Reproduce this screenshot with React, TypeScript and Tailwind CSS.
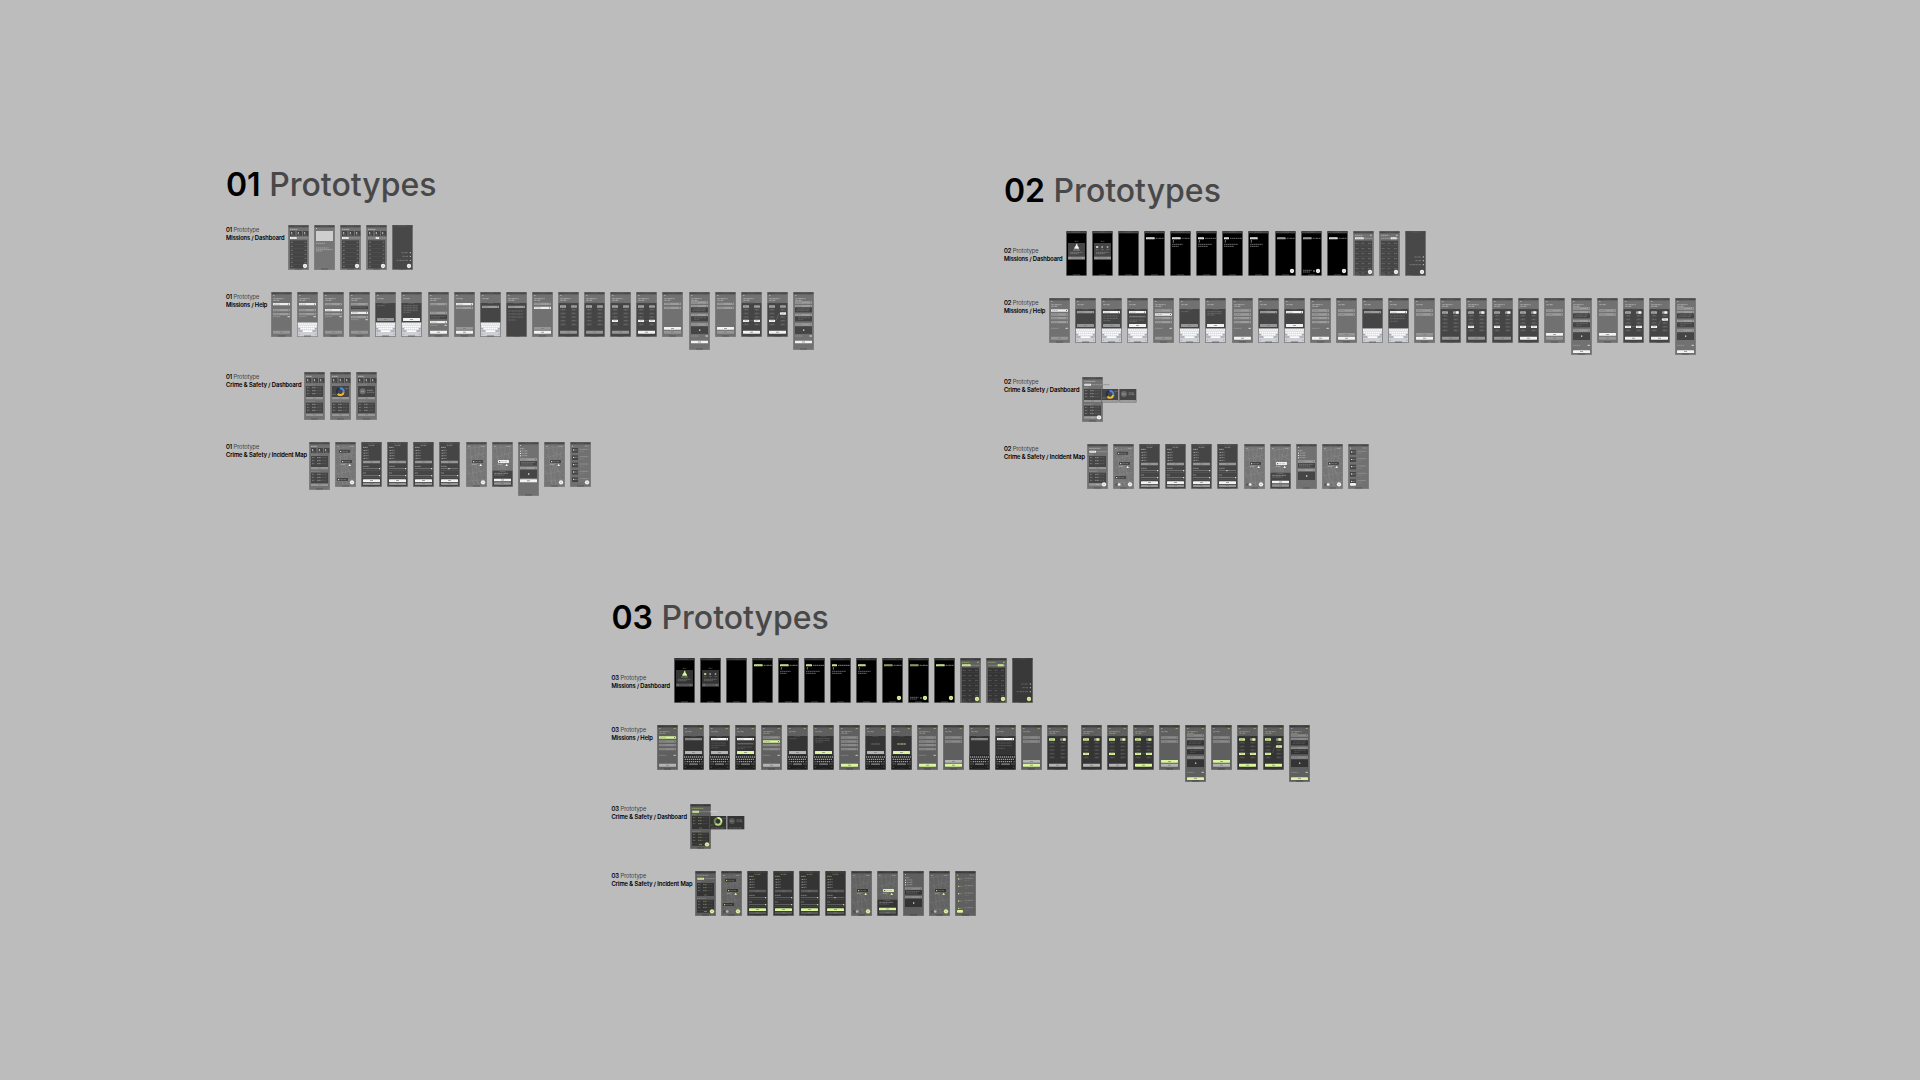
import type { ReactNode } from "react";

type Theme = {
  body: string;
  head: string;
  panel: string;
  field: string;
  active: string;
  on: string;
  button: string;
  ink: string;
  title: string;
  dim: string;
  keyboard: string;
  key: string;
  shift: string;
  road: string;
  edge: string;
};

const grey: Theme = {
  body: "#717171",
  head: "#4a4a4a",
  panel: "#454545",
  field: "#9c9c9c",
  active: "#ededed",
  on: "#f2f2f2",
  button: "#969696",
  ink: "#c4c4c4",
  title: "#b4b4b4",
  dim: "#5c5c5c",
  keyboard: "#cdcfd4",
  key: "#fdfdfd",
  shift: "#a3a8b1",
  road: "#929292",
  edge: "#858585",
};

const green: Theme = {
  body: "#5f5f5f",
  head: "#3b3b3b",
  panel: "#343434",
  field: "#8a8a8a",
  active: "#daf59c",
  on: "#daf59c",
  button: "#b4b4b4",
  ink: "#b5b5b5",
  title: "#93a86a",
  dim: "#4c4c4c",
  keyboard: "#202020",
  key: "#9a9a9a",
  shift: "#505050",
  road: "#7b7b7b",
  edge: "#7a7a7a",
};

/* Wireframe thumbnails are drawn at three units per pixel. */

function Box({ x, y, w, h, f, r = 0 }: { x: number; y: number; w: number; h: number; f: string; r?: number }) {
  return <rect x={x} y={y} width={w} height={h} rx={r} fill={f} />;
}

function Line({ x, y, w, c, s = 2, o = 0.8 }: { x: number; y: number; w: number; c: string; s?: number; o?: number }) {
  return (
    <path d={`M${x} ${y}h${w}`} stroke={c} strokeWidth={s} strokeDasharray="5 1 3 1 7 1" opacity={o} fill="none" />
  );
}

function Thumb({
  t,
  h = 45,
  w = 21,
  bg,
  gap = false,
  children,
}: {
  t: Theme;
  h?: number;
  w?: number;
  bg?: string;
  gap?: boolean;
  children?: ReactNode;
}) {
  const H = h * 3;
  return (
    <svg
      width={w}
      height={h}
      viewBox={`0 0 ${w * 3} ${H}`}
      className={gap ? "ml-2 block shrink-0" : "block shrink-0"}
      aria-hidden="true"
    >
      <Box x={0} y={0} w={63} h={H} f={t.edge} />
      <Box x={2} y={1} w={59} h={H - 3} f={bg ?? t.body} />
      <Box x={2} y={1} w={59} h={6} f={t.head} />
      <Line x={20} y={3} w={22} c={t.body} o={0.7} />
      {children}
      <Box x={21} y={H - 4} w={21} h={2} f={bg === "#000000" ? "#777777" : t.head} />
    </svg>
  );
}

function Fab({ t, y = 123 }: { t: Theme; y?: number }) {
  return (
    <>
      <circle cx={51} cy={y} r={6.5} fill={t.on} />
      <path d={`M49 ${y}h4`} stroke={t.field} strokeWidth={2} />
    </>
  );
}

function Bar({ y, f, h = 8, ink = "#777777" }: { y: number; f: string; h?: number; ink?: string }) {
  return (
    <>
      <Box x={6} y={y} w={51} h={h} f={f} r={1} />
      <Box x={27} y={y + h / 2 - 1} w={9} h={2} f={ink} />
    </>
  );
}

function Field({ y, f, h = 7 }: { y: number; f: string; h?: number }) {
  return (
    <>
      <Box x={6} y={y} w={51} h={h} f={f} r={1} />
      <Line x={9} y={y + h / 2} w={18} c="#606060" o={0.5} />
      <Box x={51} y={y + 2} w={3} h={h - 4} f="#707070" />
    </>
  );
}

function Keyboard({ t, y = 91 }: { t: Theme; y?: number }) {
  const light = t === grey;
  return (
    <>
      <Box x={2} y={y} w={59} h={133 - y} f={t.keyboard} />
      <g stroke={t.key} strokeWidth={light ? 5 : 4} fill="none" strokeDasharray={light ? "5 1" : "4 2"}>
        <path d={`M3 ${y + 5}h57`} />
        <path d={`M5 ${y + 12}h53`} />
        <path d={`M11 ${y + 19}h41`} />
      </g>
      <Box x={3} y={y + 17} w={6} h={4} f={t.shift} />
      <Box x={54} y={y + 17} w={6} h={4} f={t.shift} />
      <Box x={18} y={y + 24} w={27} h={5} f={light ? t.key : "#6c6c6c"} r={1} />
      <Box x={4} y={y + 24} w={11} h={4} f={t.shift} />
      <Box x={48} y={y + 24} w={11} h={4} f={t.shift} />
      <Box x={5} y={y + 34} w={4} h={3} f={t.shift} />
      <Box x={54} y={y + 34} w={4} h={3} f={t.shift} />
    </>
  );
}

function Heading({ t, lines = 2 }: { t: Theme; lines?: number }) {
  return (
    <>
      <Box x={7} y={9} w={3} h={3} f={t.ink} />
      {t === green && <Box x={50} y={9} w={6} h={3} f={t.title} />}
      <Line x={7} y={20} w={lines === 1 ? 20 : 31} c={t.title} s={3} />
      {lines > 1 && <Line x={7} y={25} w={19} c={t.title} s={3} />}
    </>
  );
}

function Toggle({ t, y }: { t: Theme; y: number }) {
  return (
    <>
      <Line x={6} y={y} w={22} c={t.ink} o={0.6} />
      <Box x={49} y={y - 2} w={8} h={4} f={t.ink} r={2} />
    </>
  );
}

type FormProps = {
  t: Theme;
  fields: number[];
  active?: number;
  toggle?: number;
  upper?: "on" | "off";
  lower?: "on" | "off";
  keyboard?: boolean;
  blocks?: [number, number][];
  lines?: number;
};

function Form({ t, fields, active, toggle, upper, lower, keyboard, blocks = [], lines = 2 }: FormProps) {
  return (
    <Thumb t={t}>
      <Heading t={t} lines={lines} />
      {blocks.map(([y, bh]) => (
        <g key={y}>
          <Box x={6} y={y} w={51} h={bh} f={t.panel} />
          <Line x={9} y={y + 4} w={43} c={t.field} o={0.5} />
          {bh > 8 && <Line x={9} y={y + 9} w={27} c={t.field} o={0.5} />}
        </g>
      ))}
      {fields.map((y, i) => (
        <Field key={y} y={y} f={i === active ? t.active : t.field} />
      ))}
      {toggle !== undefined && <Toggle t={t} y={toggle} />}
      {upper && <Bar y={105} f={upper === "on" ? t.on : t.button} />}
      {lower && <Bar y={116} h={9} f={lower === "on" ? t.on : t.button} />}
      {keyboard && <Keyboard t={t} />}
    </Thumb>
  );
}

type SheetProps = {
  t: Theme;
  field?: "on" | "off";
  fieldY?: number;
  rows?: number[];
  text?: number[];
  amount?: string;
  button?: "on" | "off";
  keyboard?: boolean;
  full?: boolean;
};

function Sheet({ t, field, fieldY = 39, rows = [], text = [], amount, button, keyboard = true, full }: SheetProps) {
  return (
    <Thumb t={t}>
      <Heading t={t} lines={full ? 2 : 1} />
      <Box x={2} y={33} w={59} h={100} f={t.panel} />
      <Box x={22} y={33} w={18} h={2} f={t.dim} />
      {field && <Field y={fieldY} f={field === "on" ? "#f4f4f4" : t.field} />}
      {rows.map((y) => (
        <g key={y}>
          <Box x={6} y={y - 3} w={51} h={6} f={t.dim} />
          <Line x={8} y={y} w={45} c={t.field} />
        </g>
      ))}
      {text.map((y, i) => (
        <Line key={y} x={7} y={y} w={i === text.length - 1 ? 22 : 44} c={t.field} o={0.6} />
      ))}
      {amount && <Line x={19} y={57} w={26} c={amount} s={4} />}
      {button && <Bar y={78} h={9} f={button === "on" ? t.on : t.button} />}
      {keyboard && <Keyboard t={t} />}
    </Thumb>
  );
}

type PickerProps = {
  t: Theme;
  left?: number;
  right?: number;
  head?: "plain" | "split";
  button?: "on" | "off";
  link?: boolean;
  gap?: boolean;
};

function Picker({ t, left, right, head = "plain", button = "off", link, gap }: PickerProps) {
  const rows = [53, 64, 75, 86, 97];
  const cell = t === green ? "#3e3e3e" : "#4f4f4f";
  return (
    <Thumb t={t} gap={gap}>
      <Heading t={t} />
      <Box x={2} y={33} w={59} h={100} f={t.panel} />
      <Box x={22} y={32} w={18} h={2} f={t.dim} />
      <Box x={6} y={40} w={18} h={7} f={t === green ? t.on : "#a9a9a9"} r={1} />
      <Box x={39} y={40} w={18} h={7} f={t.field} r={1} />
      {head === "split" && <Box x={left === undefined ? 48 : 46} y={40} w={8} h={7} f={t.on} r={1} />}
      <Line x={9} y={44} w={11} c="#777777" />
      {rows.map((y, i) => (
        <g key={y}>
          <Box x={6} y={y - 3} w={18} h={7} f={i === left ? t.on : cell} r={1} />
          <Box x={39} y={y - 3} w={18} h={7} f={i === right ? t.on : cell} r={1} />
          <Line x={11} y={y} w={9} c={i === left ? "#777777" : t.field} o={0.6} />
          <Line x={43} y={y} w={10} c={i === right ? "#777777" : t.field} o={0.6} />
        </g>
      ))}
      {link && left !== undefined && right !== undefined && (
        <path
          d={`M24 ${rows[left]}C32 ${rows[left]} 31 ${rows[right]} 39 ${rows[right]}`}
          stroke={t.field}
          strokeWidth={1}
          fill="none"
        />
      )}
      <Bar y={116} h={9} f={button === "on" ? t.on : t.button} />
    </Thumb>
  );
}

function Review({ t, h = 57 }: { t: Theme; h?: number }) {
  const first = h === 58;
  return (
    <Thumb t={t} h={h}>
      <Heading t={t} />
      <Field y={28} f={t.field} />
      <Field y={39} f={t.field} />
      <Box x={6} y={46} w={51} h={15} f={t.panel} />
      <Line x={13} y={51} w={38} c={t.field} o={0.6} />
      <Line x={10} y={56} w={38} c={t.field} o={0.5} />
      <Field y={65} f={t.field} />
      <Box x={6} y={73} w={51} h={15} f={t.panel} />
      <Line x={16} y={77} w={34} c={t.field} o={0.5} />
      <Line x={16} y={82} w={14} c={t.field} o={0.5} />
      <Field y={94} f={t.field} />
      <Box x={6} y={103} w={51} h={23} f={t.panel} />
      <Box x={30} y={112} w={4} h={5} f={t.ink} r={1} />
      <Toggle t={t} y={first ? 132 : 142} />
      <Bar y={first ? 146 : 157} h={8} f={t.on} />
    </Thumb>
  );
}

function Cards({ t }: { t: Theme }) {
  return (
    <>
      {[6, 26, 45].map((x) => (
        <g key={x}>
          <Box x={x} y={18} w={16} h={15} f={t.panel} />
          <circle cx={x + 5} cy={24} r={2} fill={t.on} />
          <Line x={x + 3} y={30} w={8} c={t.field} />
        </g>
      ))}
    </>
  );
}

function Tabs({ t, x = 6, y, w = 20 }: { t: Theme; x?: number; y: number; w?: number }) {
  return (
    <>
      <Line x={6} y={y + 3} w={53} c={t.field} s={4} o={0.7} />
      <Box x={x} y={y} w={w} h={6} f={t.on} r={1} />
      <Line x={x + 3} y={y + 3} w={w - 6} c="#888888" o={0.6} />
    </>
  );
}

function MissionList({ t, tab = 6, w = 20 }: { t: Theme; tab?: number; w?: number }) {
  return (
    <Thumb t={t}>
      <Line x={6} y={13} w={22} c={t.ink} s={3} />
      <Cards t={t} />
      <Tabs t={t} x={tab} y={36} w={w} />
      <Box x={6} y={46} w={51} h={84} f={t.panel} />
      {[52, 64, 76, 88, 100, 112, 124].map((y) => (
        <g key={y}>
          <Line x={9} y={y} w={6} c={t.ink} o={0.7} />
          <Line x={50} y={y} w={5} c={t.ink} o={0.6} />
          <Box x={8} y={y + 5} w={47} h={1} f={t.dim} />
        </g>
      ))}
      <Fab t={t} />
    </Thumb>
  );
}

function MissionTable({ t, tab = 6 }: { t: Theme; tab?: number }) {
  return (
    <Thumb t={t}>
      <Line x={6} y={13} w={22} c={t.title} s={3} />
      <Box x={51} y={11} w={5} h={4} f={t.title} />
      <Tabs t={t} x={tab} y={19} w={tab === 6 ? 26 : 18} />
      <Box x={6} y={29} w={51} h={102} f={t.panel} />
      {[37, 53, 68, 83, 98, 113, 126].map((y) => (
        <g key={y}>
          <Line x={8} y={y} w={10} c={t.ink} o={0.5} />
          <Line x={26} y={y} w={8} c={t.ink} o={0.5} />
          <Line x={45} y={y} w={9} c={t.ink} o={0.5} />
          <Box x={8} y={y + 7} w={47} h={1} f={t.dim} />
        </g>
      ))}
      <Fab t={t} />
    </Thumb>
  );
}

function Article({ t }: { t: Theme }) {
  return (
    <Thumb t={t} bg="#767676">
      <Box x={6} y={9} w={3} h={3} f={t.ink} />
      <Box x={6} y={18} w={51} h={30} f="#cecece" />
      <Line x={6} y={55} w={28} c={t.ink} />
      <Line x={6} y={69} w={38} c={t.ink} />
      <Line x={6} y={74} w={50} c={t.ink} />
      <Line x={6} y={78} w={18} c={t.ink} />
    </Thumb>
  );
}

function Menu({ t, y = 83 }: { t: Theme; y?: number }) {
  return (
    <Thumb t={t} bg={t === green ? "#393939" : "#484848"}>
      {[0, 11, 23].map((d, i) => (
        <g key={d}>
          <Line x={[28, 31, 14][i]} y={y + d} w={[20, 17, 34][i]} c={t.field} />
          <circle cx={55} cy={y + d} r={2} fill={t.ink} />
        </g>
      ))}
      <Fab t={t} />
    </Thumb>
  );
}

function Black({ t, children }: { t: Theme; children?: ReactNode }) {
  return (
    <Thumb t={t} bg="#000000">
      {children}
    </Thumb>
  );
}

function Onboarding({ t, step }: { t: Theme; step: 1 | 2 }) {
  return (
    <Black t={t}>
      <Line x={26} y={31} w={11} c={t.title} o={0.7} />
      <Box x={6} y={36} w={51} h={50} f={t.panel} />
      {step === 1 ? (
        <path d="M31 38h3v5l5 7v3H25v-3l5-7z" fill={t.on} />
      ) : (
        [15, 31, 47].map((x, i) => (
          <g key={x}>
            <Box x={x - 3} y={46} w={i === 0 ? 7 : 5} h={4} f={i === 0 ? t.on : t.ink} r={1} />
            <Line x={x - 3} y={56} w={7} c={t.field} />
          </g>
        ))
      )}
      {step === 1 && <Line x={22} y={57} w={20} c={t.on} />}
      <Line x={12} y={64} w={38} c={t.field} />
      <Line x={12} y={68} w={26} c={t.field} />
      <Box x={6} y={77} w={51} h={8} f={t === green ? "#555555" : "#8c8c8c"} />
      <Line x={10} y={81} w={6} c={t.ink} />
      <Line x={47} y={81} w={6} c={t.ink} />
    </Black>
  );
}

type CoachProps = {
  t: Theme;
  w: number;
  tabs?: boolean;
  dim?: boolean;
  tip?: number;
  fab?: boolean;
  hint?: boolean;
};

function Coach({ t, w, tabs = true, dim, tip, fab, hint }: CoachProps) {
  return (
    <Black t={t}>
      {tabs && <Line x={6 + w + 3} y={22} w={51 - w} c={t.button} s={3} o={0.7} />}
      <Box x={6} y={19} w={w} h={6} f={dim ? (t === green ? "#8fa566" : "#a8a8a8") : t.on} r={1} />
      <Line x={9} y={22} w={w - 6} c="#777777" o={0.6} />
      {tip !== undefined && (
        <>
          <path d="M10 27v8" stroke={t.on} strokeWidth={1.5} />
          <Line x={6} y={40} w={tip} c={t.ink} />
          <Line x={6} y={46} w={tip - 12} c={t.ink} />
        </>
      )}
      {hint && (
        <>
          <Line x={6} y={118} w={26} c={t.ink} />
          <Line x={6} y={123} w={21} c={t.ink} />
          <Box x={36} y={119} w={6} h={2} f={t.on} />
        </>
      )}
      {fab && <Fab t={t} y={120} />}
    </Black>
  );
}

function Stats({ t, y, h = 36 }: { t: Theme; y: number; h?: number }) {
  return (
    <>
      <Box x={6} y={y} w={51} h={h} f={t.panel} />
      {[5, 14, 23, 32].filter((d) => d < h - 2).map((d) => (
        <g key={d}>
          <Line x={9} y={y + d} w={7} c={t.ink} o={0.7} />
          <Line x={24} y={y + d} w={12} c={t.title} o={0.9} />
          <Line x={38} y={y + d} w={14} c={t.field} o={0.4} />
        </g>
      ))}
    </>
  );
}

function Donut({ x, y, colors }: { x: number; y: number; colors: [string, string, string] }) {
  return (
    <g fill="none" strokeWidth={6}>
      <path d={`M${x - 2} ${y - 10}A10 10 0 0 1 ${x + 10} ${y + 2}`} stroke={colors[0]} />
      <path d={`M${x + 10} ${y + 2}A10 10 0 0 1 ${x - 8} ${y + 6}`} stroke={colors[1]} />
      <path d={`M${x - 8} ${y + 6}A10 10 0 0 1 ${x - 2} ${y - 10}`} stroke={colors[2]} />
    </g>
  );
}

const blueGold: [string, string, string] = ["#4b86e8", "#f2b92c", "#22334d"];
const greens: [string, string, string] = ["#dfeec0", "#b5d873", "#6f9442"];

function SafetyTall({ t, chart }: { t: Theme; chart?: "donut" | "gauge" }) {
  return (
    <Thumb t={t} h={48}>
      <Line x={6} y={13} w={17} c={t.ink} s={3} />
      <Cards t={t} />
      <Line x={6} y={39} w={26} c={t.ink} o={0.4} />
      {chart ? <Box x={6} y={42} w={51} h={33} f={t.panel} /> : <Stats t={t} y={42} h={33} />}
      {chart === "donut" && (
        <>
          <Donut x={31} y={59} colors={blueGold} />
          <Line x={8} y={67} w={10} c={t.field} />
          <Line x={46} y={50} w={9} c={t.field} />
        </>
      )}
      {chart === "gauge" && (
        <>
          <circle cx={20} cy={58} r={9} fill="#707070" />
          <Line x={15} y={58} w={10} c={t.ink} />
          <Line x={33} y={55} w={18} c={t.ink} />
          <Line x={33} y={61} w={22} c={t.field} />
        </>
      )}
      <Bar y={75} h={7} f={t.button} />
      <Line x={6} y={88} w={26} c={t.ink} o={0.4} />
      <Stats t={t} y={92} h={32} />
      <Bar y={125} h={7} f={t.button} />
    </Thumb>
  );
}

function SafetyBody({ t }: { t: Theme }) {
  return (
    <>
      <Line x={6} y={13} w={34} c={t.title} s={3} />
      <Tabs t={t} x={7} y={20} w={20} />
      <Line x={6} y={32} w={13} c={t.ink} o={0.5} />
      <Stats t={t} y={36} h={33} />
      <Bar y={69} h={6} f={t === green ? t.panel : t.button} />
      <Line x={6} y={82} w={26} c={t.ink} o={0.5} />
      <Stats t={t} y={86} h={31} />
      <Bar y={118} h={7} f={t === green ? t.panel : t.button} ink={t.title} />
    </>
  );
}

function SafetyWide({ t, colors }: { t: Theme; colors: [string, string, string] }) {
  const isGreen = t === green;
  return (
    <Thumb t={t} w={55}>
      <SafetyBody t={t} />
      <Line x={60} y={23} w={22} c={isGreen ? "#d8d8d8" : "#858585"} s={3} />
      <Box x={59} y={36} w={50} h={40} f={t.panel} />
      <Box x={112} y={36} w={51} h={40} f={t.panel} />
      {!isGreen && <Box x={59} y={69} w={50} h={7} f={t.button} />}
      {!isGreen && <Box x={112} y={69} w={51} h={7} f={t.button} />}
      <Line x={64} y={72} w={40} c={t.ink} o={0.5} />
      <Line x={118} y={72} w={38} c={t.ink} o={0.5} />
      <Line x={62} y={63} w={10} c={t.field} />
      <Line x={98} y={43} w={9} c={t.field} />
      <Donut x={84} y={52} colors={colors} />
      <circle cx={126} cy={51} r={9} fill={isGreen ? "#555555" : "#6c6c6c"} />
      <Line x={121} y={51} w={10} c={t.ink} />
      <Line x={140} y={48} w={15} c={t.ink} />
      <Line x={140} y={53} w={19} c={t.field} />
      <Fab t={t} y={121} />
    </Thumb>
  );
}

function SafetyHome({ t }: { t: Theme }) {
  return (
    <Thumb t={t}>
      <SafetyBody t={t} />
      <Fab t={t} y={121} />
    </Thumb>
  );
}

function Pin({ t, x, y, hot }: { t: Theme; x: number; y: number; hot?: boolean }) {
  return (
    <>
      <Box x={x} y={y} w={33} h={9} f={hot ? t.on : t.panel} r={2} />
      <circle cx={x + 5} cy={y + 5} r={2} fill={hot ? t.panel : t.on} />
      <Line x={x + 10} y={y + 5} w={18} c={hot ? "#999999" : t.field} />
    </>
  );
}

function Map({ t, mode, toggle }: { t: Theme; mode: "all" | "one" | "detail"; toggle?: boolean }) {
  return (
    <Thumb t={t} bg={t === green ? "#626262" : "#757575"}>
      <path
        d="M3 20L60 12M3 48L60 32M3 72L60 58M3 96L60 85M3 118L60 112M12 8L24 130M26 8L35 130M42 8L33 60L56 130M55 10L44 72M3 34L30 60L20 100L42 130M3 84L26 130M30 30L60 48M18 62L60 102"
        stroke={t.road}
        strokeWidth={1}
        fill="none"
      />
      <Box x={7} y={12} w={3} h={3} f={t.ink} />
      <Line x={45} y={13} w={11} c={t.ink} />
      {mode === "all" && <Pin t={t} x={12} y={23} />}
      {mode === "all" && <Pin t={t} x={6} y={toggle ? 96 : 108} />}
      <Pin t={t} x={18} y={54} hot={mode === "detail"} />
      <Line x={18} y={67} w={13} c={t.ink} />
      <path d="M44 65l4 7h-8z" fill={t.on} />
      {mode === "detail" ? (
        <>
          <Box x={2} y={86} w={59} h={47} f={t.panel} />
          <Box x={23} y={87} w={17} h={1} f={t.field} />
          <Line x={7} y={94} w={42} c={t.ink} />
          <Line x={7} y={99} w={30} c={t.field} />
          <Bar y={110} h={8} f={t.on} />
          <Bar y={121} h={7} f={t === green ? t.body : t.button} />
        </>
      ) : (
        <>
          {toggle && <Box x={6} y={118} w={18} h={7} f={t.dim} r={3} />}
          {toggle && <Box x={14} y={118} w={9} h={7} f={t === green ? t.ink : t.on} r={3} />}
          <Fab t={t} y={121} />
        </>
      )}
    </Thumb>
  );
}

function Filter({ t, knob = 56 }: { t: Theme; knob?: number }) {
  return (
    <Thumb t={t} bg={t.panel}>
      <Line x={23} y={10} w={17} c={t.title} />
      <Line x={6} y={16} w={14} c={t.title} s={3} />
      {[25, 33, 41, 49].map((y) => (
        <g key={y}>
          <Box x={8} y={y - 1} w={3} h={3} f={t.ink} />
          <Line x={13} y={y} w={11} c={t.ink} o={0.7} />
        </g>
      ))}
      <Bar y={56} h={8} f={t === green ? "#5a5a5a" : t.button} />
      <Line x={6} y={73} w={17} c={t.ink} />
      <Box x={6} y={80} w={51} h={1} f={t.ink} />
      <circle cx={knob} cy={80} r={2} fill={t.on} />
      <Line x={6} y={85} w={51} c={t.dim} s={3} />
      <Line x={6} y={93} w={9} c={t.ink} />
      <Box x={6} y={101} w={51} h={1} f={t.ink} />
      <circle cx={56} cy={101} r={2} fill={t.on} />
      <Line x={6} y={106} w={51} c={t.dim} s={3} />
      <Bar y={112} h={8} f={t.on} />
      <Bar y={122} h={7} f={t === green ? "#5a5a5a" : t.button} />
    </Thumb>
  );
}

function Report({ t, h = 45 }: { t: Theme; h?: number }) {
  return (
    <Thumb t={t} h={h}>
      <Box x={6} y={9} w={3} h={3} f={t.ink} />
      <Line x={6} y={20} w={13} c={t.title} s={3} />
      {[27, 34, 41].map((y) => (
        <g key={y}>
          <Box x={6} y={y - 1} w={3} h={3} f={t.on} />
          <Line x={11} y={y} w={17} c={t.ink} />
        </g>
      ))}
      <Field y={49} f={t.field} />
      <Box x={6} y={57} w={51} h={14} f={t.panel} />
      <Line x={9} y={61} w={43} c={t.field} />
      <Line x={9} y={66} w={35} c={t.field} />
      <Field y={75} f={t.field} />
      <Box x={6} y={83} w={51} h={25} f={t.panel} />
      <Box x={30} y={94} w={4} h={4} f={t.on} />
      {h > 45 && <Bar y={112} h={9} f={t.on} />}
    </Thumb>
  );
}

function Feed({ t, toggle }: { t: Theme; toggle?: boolean }) {
  return (
    <Thumb t={t}>
      <Box x={6} y={11} w={3} h={3} f={t.ink} />
      <Line x={44} y={12} w={12} c={t.ink} />
      {[18, 40, 62, 84, 106].map((y) => (
        <g key={y}>
          {t === grey && <Box x={6} y={y} w={18} h={14} f={t.panel} />}
          <circle cx={11} cy={y + 6} r={2} fill={t.on} />
          <Line x={14} y={y + 6} w={9} c={t.title} />
          <Line x={29} y={y + 4} w={26} c={t.ink} o={0.6} />
          <Line x={29} y={y + 11} w={12} c={t.field} o={0.6} />
        </g>
      ))}
      {toggle && <Box x={6} y={117} w={18} h={8} f={t.on} r={3} />}
      {!toggle && <Fab t={t} y={121} />}
    </Thumb>
  );
}

type RowProps = {
  no: string;
  name: string;
  children: ReactNode;
  lowered?: boolean;
  labelWidth: string;
};

function Row({ no, name, children, lowered = false, labelWidth }: RowProps) {
  return (
    <section className="flex items-start">
      <div
        className={`${labelWidth} ${lowered ? "pt-4" : "pt-px"} shrink-0 font-['Inter_Display','Inter',sans-serif] text-[6px] leading-[8px] whitespace-nowrap`}
      >
        <p className="text-[#3c3c3c]">
          <span className="font-semibold text-black">{no}</span> Prototype
        </p>
        <h2 className="font-semibold text-black">{name}</h2>
      </div>
      {children}
    </section>
  );
}

function Board({ no, children }: { no: string; children: ReactNode }) {
  return (
    <article className="flex flex-col gap-[22px]">
      <h1 className="pt-[3px] text-[32px] leading-[36px] font-medium text-[#484848]">
        <span className="font-semibold text-black">{no}</span> Prototypes
      </h1>
      {children}
    </article>
  );
}

const strip = "flex items-start justify-between";

function HelpFlow({ t }: { t: Theme }) {
  const list = [34, 46, 57, 69];
  const isGreen = t === green;
  return (
    <div className={`${strip} ${isGreen ? "w-[654px]" : "w-[647px]"}`}>
      <Form t={t} fields={list} active={0} toggle={91} lower="off" />
      <Sheet t={t} field="off" button="off" />
      <Sheet t={t} field="on" text={[54, 61, 68]} button="off" />
      <Sheet t={t} field="on" rows={[56]} text={[66, 71]} button="on" />
      <Form t={t} fields={list} active={1} toggle={91} lower="off" />
      <Sheet t={t} text={[41]} button="off" />
      <Sheet t={t} text={[41, 46, 51]} button="on" />
      <Form t={t} fields={list} toggle={91} lower="on" />
      {isGreen ? <Sheet t={t} amount="#666666" button="off" /> : <Sheet t={t} field="off" button="off" />}
      {isGreen ? <Sheet t={t} amount="#a9bf78" button="on" /> : <Sheet t={t} field="on" button="on" />}
      <Form t={t} fields={list} toggle={91} lower="on" />
      <Form t={t} fields={[34, 46]} upper="off" lower="on" lines={1} />
      <Sheet t={t} field="off" />
      <Sheet t={t} field="on" text={[54, 62, 70]} />
      <Form t={t} fields={[34, 46]} upper="off" lower="on" lines={1} />
      <Picker t={t} head="split" />
      <Picker t={t} head="split" left={3} gap={isGreen} />
      <Picker t={t} head="split" left={3} />
      <Picker t={t} head="split" left={3} right={3} button="on" link />
      <Form t={t} fields={[34, 46]} upper="on" lower="off" lines={1} />
      <Review t={t} />
      <Form t={t} fields={[34, 46]} upper="on" lower="off" lines={1} />
      <Picker t={t} head="split" left={3} right={3} button="on" link />
      <Picker t={t} head="split" left={3} right={1} button="on" link />
      <Review t={t} />
    </div>
  );
}

function DashboardFlow({ t }: { t: Theme }) {
  return (
    <div className={`${strip} w-[360px]`}>
      <Onboarding t={t} step={1} />
      <Onboarding t={t} step={2} />
      <Black t={t} />
      <Coach t={t} w={26} />
      <Coach t={t} w={26} tip={32} />
      <Coach t={t} w={18} tip={42} />
      <Coach t={t} w={15} tip={42} />
      <Coach t={t} w={23} tabs={false} tip={38} />
      <Coach t={t} w={26} dim fab />
      <Coach t={t} w={26} dim fab hint />
      <Coach t={t} w={26} fab />
      <MissionTable t={t} />
      <MissionTable t={t} tab={35} />
      <Menu t={t} y={78} />
    </div>
  );
}

function IncidentFlow({ t, first, tall = 45, toggle }: { t: Theme; first: ReactNode; tall?: number; toggle?: boolean }) {
  return (
    <div className={`${strip} w-[282px]`}>
      {first}
      <Map t={t} mode="all" toggle={toggle} />
      <Filter t={t} />
      <Filter t={t} />
      <Filter t={t} />
      <Filter t={t} knob={30} />
      <Map t={t} mode="one" toggle={toggle} />
      <Map t={t} mode="detail" />
      <Report t={t} h={tall} />
      <Map t={t} mode="one" toggle={toggle} />
      <Feed t={t} toggle={toggle} />
    </div>
  );
}

export default function App() {
  return (
    <main className="flex min-h-screen flex-col items-center justify-center gap-[101px] bg-[#bcbcbc] pb-px pl-0.5 font-['Inter',sans-serif]">
      <div className="flex items-center justify-center gap-[190px]">
        <Board no="01">
          <Row no="01" name="Missions / Dashboard" labelWidth="w-[62px]">
            <div className={`${strip} w-[125px]`}>
              <MissionList t={grey} />
              <Article t={grey} />
              <MissionList t={grey} />
              <MissionList t={grey} tab={29} w={10} />
              <Menu t={grey} />
            </div>
          </Row>
          <Row no="01" name="Missions / Help" labelWidth="w-[45px]">
            <div className={`${strip} w-[543px]`}>
              <Form t={grey} fields={[33, 51, 63]} active={0} toggle={74} lower="off" />
              <Form t={grey} fields={[33, 51, 63]} active={0} toggle={74} keyboard />
              <Form t={grey} fields={[33, 51, 63]} active={1} toggle={74} lower="off" />
              <Form t={grey} fields={[33, 59, 72]} active={1} toggle={83} blocks={[[43, 8]]} lower="off" />
              <Sheet t={grey} text={[41]} button="off" />
              <Sheet t={grey} text={[41, 46, 51, 56, 61]} button="on" />
              <Form t={grey} fields={[33, 59, 87]} active={2} toggle={100} blocks={[[69, 13]]} lower="on" />
              <Form t={grey} fields={[33, 44]} active={0} upper="off" lower="on" lines={1} />
              <Sheet t={grey} field="off" fieldY={41} />
              <Sheet t={grey} field="off" fieldY={41} text={[57, 66, 75, 84]} keyboard={false} full />
              <Form t={grey} fields={[32, 44]} active={1} upper="off" lower="on" />
              <Picker t={grey} />
              <Picker t={grey} />
              <Picker t={grey} left={3} />
              <Picker t={grey} left={3} right={3} button="on" link />
              <Form t={grey} fields={[32, 44]} upper="on" lower="off" />
              <Review t={grey} h={58} />
              <Form t={grey} fields={[32, 44]} upper="on" lower="off" />
              <Picker t={grey} left={3} right={3} button="on" link />
              <Picker t={grey} left={3} right={1} button="on" link />
              <Review t={grey} h={58} />
            </div>
          </Row>
          <Row no="01" name="Crime & Safety / Dashboard" labelWidth="w-[78px]">
            <div className={`${strip} w-[73px]`}>
              <SafetyTall t={grey} />
              <SafetyTall t={grey} chart="donut" />
              <SafetyTall t={grey} chart="gauge" />
            </div>
          </Row>
          <Row no="01" name="Crime & Safety / Incident Map" labelWidth="w-[83px]">
            <IncidentFlow t={grey} first={<SafetyTall t={grey} />} tall={54} />
          </Row>
        </Board>

        <Board no="02">
          <Row no="02" name="Missions / Dashboard" labelWidth="w-[62px]" lowered>
            <DashboardFlow t={grey} />
          </Row>
          <Row no="02" name="Missions / Help" labelWidth="w-[45px]">
            <HelpFlow t={grey} />
          </Row>
          <Row no="02" name="Crime & Safety / Dashboard" labelWidth="w-[78px]">
            <SafetyWide t={grey} colors={blueGold} />
          </Row>
          <Row no="02" name="Crime & Safety / Incident Map" labelWidth="w-[83px]">
            <IncidentFlow t={grey} first={<SafetyHome t={grey} />} toggle />
          </Row>
        </Board>
      </div>

      <Board no="03">
        <Row no="03" name="Missions / Dashboard" labelWidth="w-[62px]" lowered>
          <DashboardFlow t={green} />
        </Row>
        <Row no="03" name="Missions / Help" labelWidth="w-[45px]">
          <HelpFlow t={green} />
        </Row>
        <Row no="03" name="Crime & Safety / Dashboard" labelWidth="w-[78px]">
          <SafetyWide t={green} colors={greens} />
        </Row>
        <Row no="03" name="Crime & Safety / Incident Map" labelWidth="w-[83px]">
          <IncidentFlow t={green} first={<SafetyHome t={green} />} toggle />
        </Row>
      </Board>
    </main>
  );
}
